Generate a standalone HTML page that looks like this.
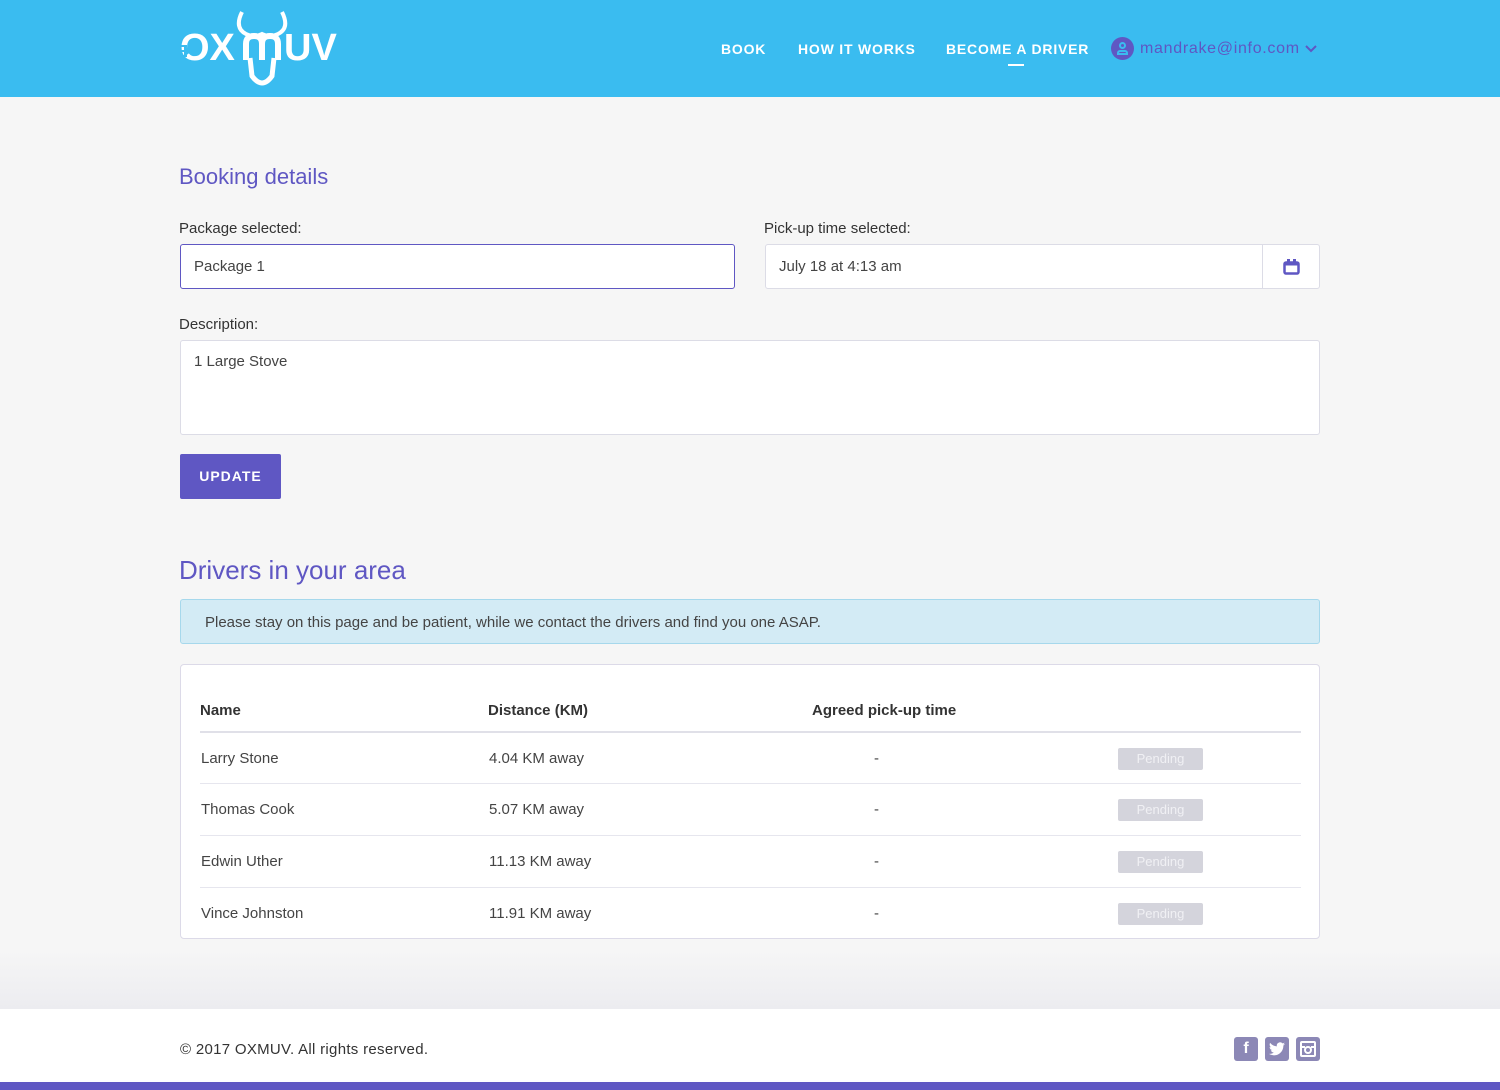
<!DOCTYPE html>
<html><head><meta charset="utf-8"><style>
*{box-sizing:border-box;margin:0;padding:0}
body{width:1500px;height:1090px;background:#f6f6f6;font-family:"Liberation Sans",sans-serif;color:#333;position:relative;overflow:hidden}
.hdr{position:absolute;left:0;top:0;width:1500px;height:97px;background:#3abcf0}
.logo{position:absolute;left:180px;top:8px}
.nav{position:absolute;top:41px;color:#fff;font-weight:bold;font-size:14px;letter-spacing:.8px}
.user{position:absolute;left:1111px;top:37px;color:#5f57c3;font-size:16px;display:flex;align-items:center;letter-spacing:.7px}
.av{width:23px;height:23px;border-radius:50%;background:#5f57c3;margin-right:6px;position:relative}
h2{position:absolute;left:179px;color:#5f57c3;font-weight:normal}
.lbl{position:absolute;font-size:15px;color:#333}
.inp{position:absolute;background:#fff;border:1px solid #dcdce6;border-radius:3px;font-size:15px;color:#444;padding:0 13px}
.btn{position:absolute;left:180px;top:454px;width:101px;height:45px;background:#5f57c3;color:#fff;font-weight:bold;font-size:14px;letter-spacing:1px;border-radius:2px;text-align:center;line-height:45px}
.alert{position:absolute;left:180px;top:599px;width:1140px;height:45px;background:#d3ebf5;border:1px solid #a6d8ec;border-radius:3px;font-size:15px;color:#444;padding-left:24px;line-height:45px}
.card{position:absolute;left:180px;top:664px;width:1140px;height:275px;background:#fff;border:1px solid #dcdae8;border-radius:4px}
.th{position:absolute;top:37px;font-weight:bold;font-size:15px;color:#333}
.row{position:absolute;left:19px;width:1101px;height:52px;border-top:1px solid #e6e6ee;font-size:15px;color:#444}
.row span{position:absolute;top:17px}
.pend{position:absolute;left:918px;top:15px;width:85px;height:22px;background:#d4d4dc;color:#f0f0f4;font-size:13px;text-align:center;line-height:22px;border-radius:2px}
.foot{position:absolute;left:0;top:1009px;width:1500px;height:73px;background:#fff}
.grad{position:absolute;left:0;top:950px;width:1500px;height:59px;background:linear-gradient(#f6f6f6,#ececf0)}
.bar{position:absolute;left:0;top:1082px;width:1500px;height:8px;background:#5f57c3}
.soc{position:absolute;top:1037px;width:24px;height:24px;background:#8c88b6;border-radius:3px;color:#fff;text-align:center;font-weight:bold;font-size:16px;line-height:24px}
</style></head><body>
<div class="hdr">
<div class="logo">
<svg width="170" height="82" viewBox="0 0 170 82">
<text x="0" y="52" font-family="Liberation Sans" font-weight="bold" font-size="38" fill="#fff">OX</text>
<text x="104" y="52" font-family="Liberation Sans" font-weight="bold" font-size="38" fill="#fff">UV</text>
<path d="M4 37 L12 43 L4 49Z" fill="#3abcf0"/>
<path d="M1 38 H7 M1 43 H8 M1 48 H7" stroke="#3abcf0" stroke-width="2"/>
<path d="M66 52 V36 Q66 28 74 28 Q82 28 82 36 V52 M82 36 Q82 28 90 28 Q98 28 98 36 V52" stroke="#fff" stroke-width="6" fill="none"/>
<path d="M70 50 L72 68 Q82 82 92 68 L94 50" stroke="#fff" stroke-width="5" fill="none"/>
<path d="M62 4 Q54 20 66 26 Q74 30 82 26 Q90 30 98 26 Q110 20 102 4" stroke="#fff" stroke-width="4" fill="none"/>
</svg>
</div>
<div class="nav" style="left:721px">BOOK</div>
<div class="nav" style="left:798px">HOW IT WORKS</div>
<div class="nav" style="left:946px">BECOME A DRIVER</div>
<div style="position:absolute;left:1008px;top:64px;width:16px;height:2px;background:#fff"></div>
<div class="user"><div class="av"><div style="position:absolute;left:8px;top:5px;width:7px;height:7px;border:2px solid #3abcf0;border-radius:50%"></div><div style="position:absolute;left:6px;top:13px;width:11px;height:5px;border:2px solid #3abcf0;border-radius:3px 3px 0 0"></div></div>mandrake@info.com<svg width="12" height="8" viewBox="0 0 12 8" style="margin-left:5px"><path d="M1 1 L6 6 L11 1" stroke="#5f57c3" stroke-width="2" fill="none"/></svg></div>
</div>

<h2 style="top:164px;font-size:22px">Booking details</h2>
<div class="lbl" style="left:179px;top:220px">Package selected:</div>
<div class="lbl" style="left:764px;top:220px">Pick-up time selected:</div>
<div class="inp" style="left:180px;top:244px;width:555px;height:45px;line-height:43px;border-color:#5f57c3">Package 1</div>
<div class="inp" style="left:765px;top:244px;width:555px;height:45px;line-height:43px">July 18 at 4:13 am
<div style="position:absolute;right:56px;top:0;width:1px;height:43px;background:#dcdce6"></div>
<svg style="position:absolute;right:19px;top:13px" width="17" height="17" viewBox="0 0 17 17"><rect x="1.5" y="4.5" width="14" height="11" rx="1.5" fill="none" stroke="#5f57c3" stroke-width="2.5"/><rect x="1.5" y="4.5" width="14" height="3" fill="#5f57c3"/><rect x="4" y="1" width="3" height="5" fill="#5f57c3"/><rect x="10" y="1" width="3" height="5" fill="#5f57c3"/></svg>
</div>
<div class="lbl" style="left:179px;top:316px">Description:</div>
<div class="inp" style="left:180px;top:340px;width:1140px;height:95px;padding-top:12px">1 Large Stove</div>
<div class="btn">UPDATE</div>

<h2 style="top:555px;font-size:26px">Drivers in your area</h2>
<div class="alert">Please stay on this page and be patient, while we contact the drivers and find you one ASAP.</div>
<div class="card">
<div class="th" style="left:19px">Name</div>
<div class="th" style="left:307px">Distance (KM)</div>
<div class="th" style="left:631px">Agreed pick-up time</div>
<div class="row" style="top:66px;border-top:2px solid #e0e0e8"><span style="left:1px">Larry Stone</span><span style="left:289px">4.04 KM away</span><span style="left:674px">-</span><div class="pend">Pending</div></div>
<div class="row" style="top:118px"><span style="left:1px">Thomas Cook</span><span style="left:289px">5.07 KM away</span><span style="left:674px">-</span><div class="pend">Pending</div></div>
<div class="row" style="top:170px"><span style="left:1px">Edwin Uther</span><span style="left:289px">11.13 KM away</span><span style="left:674px">-</span><div class="pend">Pending</div></div>
<div class="row" style="top:222px"><span style="left:1px">Vince Johnston</span><span style="left:289px">11.91 KM away</span><span style="left:674px">-</span><div class="pend">Pending</div></div>
</div>
<div class="grad"></div>
<div class="foot">
<div style="position:absolute;left:180px;top:32px;font-size:15px;color:#333;letter-spacing:.3px">© 2017 OXMUV. All rights reserved.</div>
</div>
<div class="soc" style="left:1234px">f</div>
<div class="soc" style="left:1265px"><svg width="16" height="14" viewBox="0 0 24 20" style="margin-top:5px"><path d="M24 2.4a10 10 0 0 1-2.8.8A5 5 0 0 0 23.3.4a10 10 0 0 1-3.1 1.2A4.9 4.9 0 0 0 11.8 6 14 14 0 0 1 1.7.9a4.9 4.9 0 0 0 1.5 6.6A4.9 4.9 0 0 1 1 6.9a4.9 4.9 0 0 0 3.9 4.8 5 5 0 0 1-2.200.1 4.9 4.9 0 0 0 4.600 3.4A9.9 9.9 0 0 1 0 17.3 14 14 0 0 0 7.5 19.5c9 0 14-7.5 14-14v-.6A10 10 0 0 0 24 2.4z" fill="#fff"/></svg></div>
<div class="soc" style="left:1296px"><svg width="16" height="16" viewBox="0 0 16 16" style="margin-top:4px"><rect x="1" y="1" width="14" height="14" rx="1" fill="none" stroke="#fff" stroke-width="2"/><circle cx="8" cy="9" r="3" fill="none" stroke="#fff" stroke-width="2"/><rect x="1" y="5" width="4" height="2" fill="#fff"/><rect x="11" y="5" width="4" height="2" fill="#fff"/></svg></div>
<div class="bar"></div>
</body></html>
